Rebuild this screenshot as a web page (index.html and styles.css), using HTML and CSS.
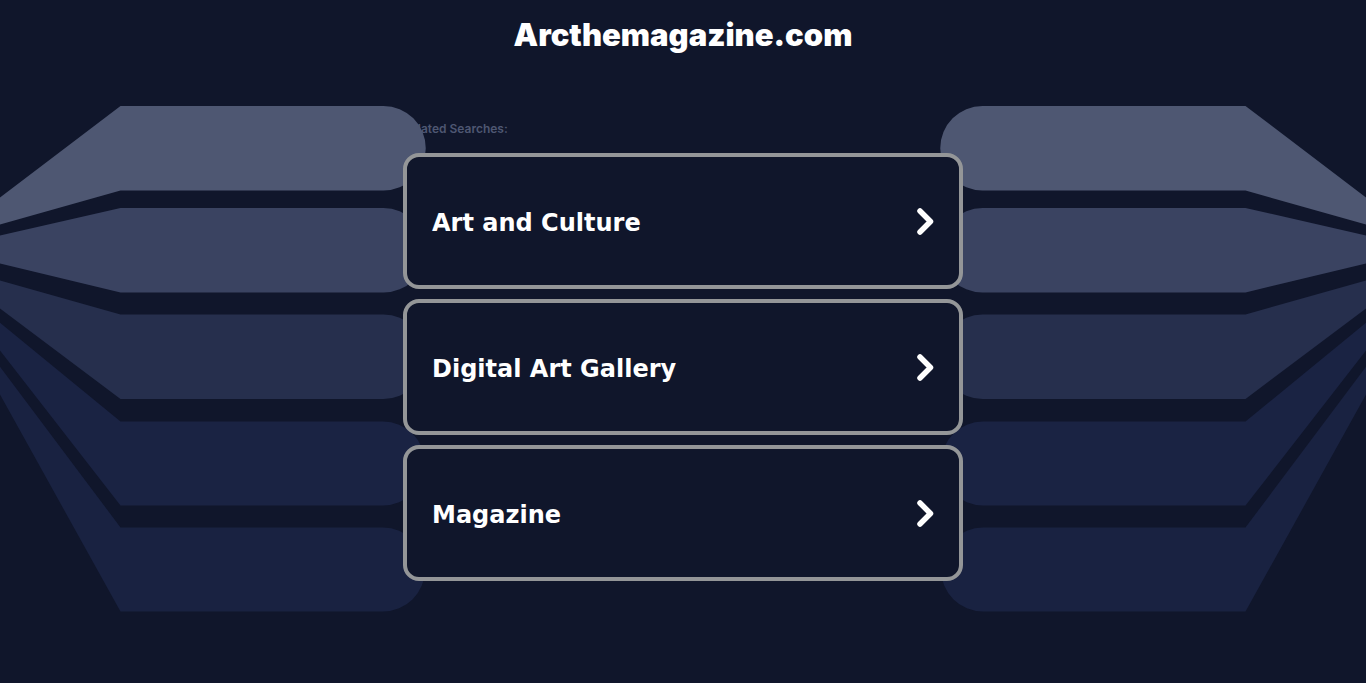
FILE: index.html
```
<!DOCTYPE html>
<html lang="en">
<head>
<meta charset="utf-8">
<meta name="viewport" content="width=device-width, initial-scale=1">
<title>Arcthemagazine.com</title>
<link rel="stylesheet" href="styles.css">
</head>
<body>
<div class="backdrop" aria-hidden="true">
  <svg class="bands" viewBox="0 0 426 683">
    <g id="band-set">
      <path fill="#4e5772" d="M-2 199L120.500 106H383.500A42 42 0 0 1 383.500 190.500H120.500L-2 225Z"/>
      <path fill="#3a4361" d="M-2 236L120.500 208H383.500A42 42 0 0 1 383.500 292.500H120.500L-2 263Z"/>
      <path fill="#262f4d" d="M-2 280L120.500 314.500H383.500A42 42 0 0 1 383.500 399H120.500L-2 307Z"/>
      <path fill="#1a2343" d="M-2 321L120.500 421.500H383A42 42 0 0 1 383 505.500H120.500L-2 348Z"/>
      <path fill="#192241" d="M-2 364L120.500 527.500H383A42 42 0 0 1 383 611.500H120.500L-2 391Z"/>
    </g>
  </svg>
  <svg class="bands bands-mirrored" viewBox="0 0 426 683"><use href="#band-set"/></svg>
</div>
<header class="header"><h1 class="domain">Arcthemagazine.com</h1></header>
<main class="searches">
  <h2 class="label">Related Searches:</h2>
  <nav class="list" aria-label="Related Searches">
    <a class="card" href="#art"><span class="card-text">Art and Culture</span>
      <svg class="chevron" viewBox="0 0 18 28" aria-hidden="true"><path d="M4 4L14.500 14.500L4 25"/></svg></a>
    <a class="card" href="#gallery"><span class="card-text">Digital Art Gallery</span>
      <svg class="chevron" viewBox="0 0 18 28" aria-hidden="true"><path d="M4 4L14.500 14.500L4 25"/></svg></a>
    <a class="card" href="#magazine"><span class="card-text">Magazine</span>
      <svg class="chevron" viewBox="0 0 18 28" aria-hidden="true"><path d="M4 4L14.500 14.500L4 25"/></svg></a>
  </nav>
</main>
</body>
</html>
```
FILE: styles.css
```
* {
  box-sizing: border-box;
}

body {
  margin: 0;
  min-height: 100vh;
  background: #10162b;
  color: #fff;
  font-family: Inter, "Open Sans", sans-serif;
}

.backdrop {
  position: absolute;
  inset: 0;
  z-index: -1;
  display: flex;
  justify-content: space-between;
  overflow: hidden;
}

.bands {
  flex: none;
  width: 426px;
  height: 683px;
}

.bands-mirrored {
  transform: scaleX(-1);
}

.header {
  padding: 16px;
  text-align: center;
}

.domain {
  margin: 0;
  font-size: 31px;
  line-height: 38px;
  font-weight: 900;
}

.searches {
  max-width: 560px;
  margin: 0 auto;
  padding-top: 50px;
}

.label {
  margin: 0;
  padding-bottom: 16px;
  color: #4e5772;
  font-size: 12px;
  line-height: 17px;
  font-weight: 600;
}

.list {
  display: grid;
  gap: 10px;
}

.card {
  display: flex;
  align-items: center;
  justify-content: space-between;
  gap: 16px;
  min-height: 136px;
  padding: 16px 25px;
  border: 4px solid #949698;
  border-radius: 16px;
  background: #10162b;
  color: #fff;
  font-family: Verdana, "DejaVu Sans", sans-serif;
  font-size: 24px;
  line-height: 32px;
  font-weight: 700;
  text-decoration: none;
}

.card-text {
  padding-top: 3px;
}

.chevron {
  flex: none;
  width: 18px;
  height: 28px;
  fill: none;
  stroke: #fff;
  stroke-width: 5.500;
  stroke-linecap: round;
  stroke-linejoin: round;
}
```
